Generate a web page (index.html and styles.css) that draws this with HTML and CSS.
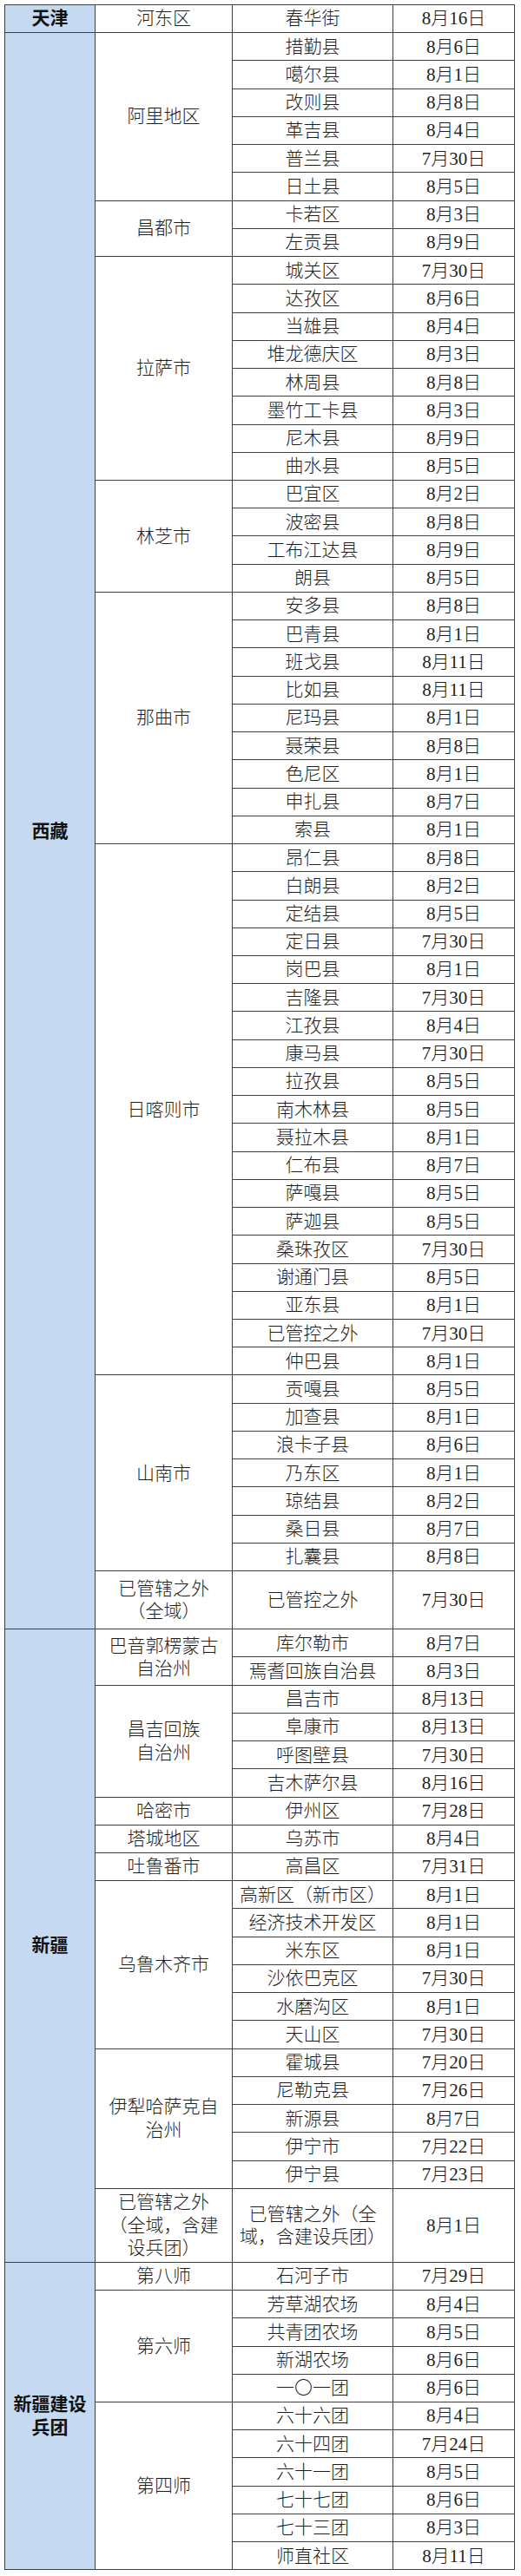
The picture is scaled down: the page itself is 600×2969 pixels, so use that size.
FILE: index.html
```html
<!DOCTYPE html>
<html lang="zh-CN">
<head>
<meta charset="utf-8">
<title>表</title>
<link rel="stylesheet" href="styles.css">
</head>
<body>
<div class="sheet">

  <div class="prov">
    <div class="pname">天津</div>
    <div class="cities">
      <div class="city">
        <div class="cname">河东区</div>
        <div class="counties">
          <div class="row"><div class="county">春华街</div><div class="date">8月16日</div></div>
        </div>
      </div>
    </div>
  </div>

  <div class="prov">
    <div class="pname">西藏</div>
    <div class="cities">
      <div class="city">
        <div class="cname">阿里地区</div>
        <div class="counties">
          <div class="row"><div class="county">措勤县</div><div class="date">8月6日</div></div>
          <div class="row"><div class="county">噶尔县</div><div class="date">8月1日</div></div>
          <div class="row"><div class="county">改则县</div><div class="date">8月8日</div></div>
          <div class="row"><div class="county">革吉县</div><div class="date">8月4日</div></div>
          <div class="row"><div class="county">普兰县</div><div class="date">7月30日</div></div>
          <div class="row"><div class="county">日土县</div><div class="date">8月5日</div></div>
        </div>
      </div>
      <div class="city">
        <div class="cname">昌都市</div>
        <div class="counties">
          <div class="row"><div class="county">卡若区</div><div class="date">8月3日</div></div>
          <div class="row"><div class="county">左贡县</div><div class="date">8月9日</div></div>
        </div>
      </div>
      <div class="city">
        <div class="cname">拉萨市</div>
        <div class="counties">
          <div class="row"><div class="county">城关区</div><div class="date">7月30日</div></div>
          <div class="row"><div class="county">达孜区</div><div class="date">8月6日</div></div>
          <div class="row"><div class="county">当雄县</div><div class="date">8月4日</div></div>
          <div class="row"><div class="county">堆龙德庆区</div><div class="date">8月3日</div></div>
          <div class="row"><div class="county">林周县</div><div class="date">8月8日</div></div>
          <div class="row"><div class="county">墨竹工卡县</div><div class="date">8月3日</div></div>
          <div class="row"><div class="county">尼木县</div><div class="date">8月9日</div></div>
          <div class="row"><div class="county">曲水县</div><div class="date">8月5日</div></div>
        </div>
      </div>
      <div class="city">
        <div class="cname">林芝市</div>
        <div class="counties">
          <div class="row"><div class="county">巴宜区</div><div class="date">8月2日</div></div>
          <div class="row"><div class="county">波密县</div><div class="date">8月8日</div></div>
          <div class="row"><div class="county">工布江达县</div><div class="date">8月9日</div></div>
          <div class="row"><div class="county">朗县</div><div class="date">8月5日</div></div>
        </div>
      </div>
      <div class="city">
        <div class="cname">那曲市</div>
        <div class="counties">
          <div class="row"><div class="county">安多县</div><div class="date">8月8日</div></div>
          <div class="row"><div class="county">巴青县</div><div class="date">8月1日</div></div>
          <div class="row"><div class="county">班戈县</div><div class="date">8月11日</div></div>
          <div class="row"><div class="county">比如县</div><div class="date">8月11日</div></div>
          <div class="row"><div class="county">尼玛县</div><div class="date">8月1日</div></div>
          <div class="row"><div class="county">聂荣县</div><div class="date">8月8日</div></div>
          <div class="row"><div class="county">色尼区</div><div class="date">8月1日</div></div>
          <div class="row"><div class="county">申扎县</div><div class="date">8月7日</div></div>
          <div class="row"><div class="county">索县</div><div class="date">8月1日</div></div>
        </div>
      </div>
      <div class="city">
        <div class="cname">日喀则市</div>
        <div class="counties">
          <div class="row"><div class="county">昂仁县</div><div class="date">8月8日</div></div>
          <div class="row"><div class="county">白朗县</div><div class="date">8月2日</div></div>
          <div class="row"><div class="county">定结县</div><div class="date">8月5日</div></div>
          <div class="row"><div class="county">定日县</div><div class="date">7月30日</div></div>
          <div class="row"><div class="county">岗巴县</div><div class="date">8月1日</div></div>
          <div class="row"><div class="county">吉隆县</div><div class="date">7月30日</div></div>
          <div class="row"><div class="county">江孜县</div><div class="date">8月4日</div></div>
          <div class="row"><div class="county">康马县</div><div class="date">7月30日</div></div>
          <div class="row"><div class="county">拉孜县</div><div class="date">8月5日</div></div>
          <div class="row"><div class="county">南木林县</div><div class="date">8月5日</div></div>
          <div class="row"><div class="county">聂拉木县</div><div class="date">8月1日</div></div>
          <div class="row"><div class="county">仁布县</div><div class="date">8月7日</div></div>
          <div class="row"><div class="county">萨嘎县</div><div class="date">8月5日</div></div>
          <div class="row"><div class="county">萨迦县</div><div class="date">8月5日</div></div>
          <div class="row"><div class="county">桑珠孜区</div><div class="date">7月30日</div></div>
          <div class="row"><div class="county">谢通门县</div><div class="date">8月5日</div></div>
          <div class="row"><div class="county">亚东县</div><div class="date">8月1日</div></div>
          <div class="row"><div class="county">已管控之外</div><div class="date">7月30日</div></div>
          <div class="row"><div class="county">仲巴县</div><div class="date">8月1日</div></div>
        </div>
      </div>
      <div class="city">
        <div class="cname">山南市</div>
        <div class="counties">
          <div class="row"><div class="county">贡嘎县</div><div class="date">8月5日</div></div>
          <div class="row"><div class="county">加查县</div><div class="date">8月1日</div></div>
          <div class="row"><div class="county">浪卡子县</div><div class="date">8月6日</div></div>
          <div class="row"><div class="county">乃东区</div><div class="date">8月1日</div></div>
          <div class="row"><div class="county">琼结县</div><div class="date">8月2日</div></div>
          <div class="row"><div class="county">桑日县</div><div class="date">8月7日</div></div>
          <div class="row"><div class="county">扎囊县</div><div class="date">8月8日</div></div>
        </div>
      </div>
      <div class="city">
        <div class="cname">已管辖之外<br>（全域）</div>
        <div class="counties">
          <div class="row tall2"><div class="county">已管控之外</div><div class="date">7月30日</div></div>
        </div>
      </div>
    </div>
  </div>

  <div class="prov">
    <div class="pname">新疆</div>
    <div class="cities">
      <div class="city">
        <div class="cname">巴音郭楞蒙古<br>自治州</div>
        <div class="counties">
          <div class="row"><div class="county">库尔勒市</div><div class="date">8月7日</div></div>
          <div class="row"><div class="county">焉耆回族自治县</div><div class="date">8月3日</div></div>
        </div>
      </div>
      <div class="city">
        <div class="cname">昌吉回族<br>自治州</div>
        <div class="counties">
          <div class="row"><div class="county">昌吉市</div><div class="date">8月13日</div></div>
          <div class="row"><div class="county">阜康市</div><div class="date">8月13日</div></div>
          <div class="row"><div class="county">呼图壁县</div><div class="date">7月30日</div></div>
          <div class="row"><div class="county">吉木萨尔县</div><div class="date">8月16日</div></div>
        </div>
      </div>
      <div class="city">
        <div class="cname">哈密市</div>
        <div class="counties">
          <div class="row"><div class="county">伊州区</div><div class="date">7月28日</div></div>
        </div>
      </div>
      <div class="city">
        <div class="cname">塔城地区</div>
        <div class="counties">
          <div class="row"><div class="county">乌苏市</div><div class="date">8月4日</div></div>
        </div>
      </div>
      <div class="city">
        <div class="cname">吐鲁番市</div>
        <div class="counties">
          <div class="row"><div class="county">高昌区</div><div class="date">7月31日</div></div>
        </div>
      </div>
      <div class="city">
        <div class="cname">乌鲁木齐市</div>
        <div class="counties">
          <div class="row"><div class="county">高新区（新市区）</div><div class="date">8月1日</div></div>
          <div class="row"><div class="county">经济技术开发区</div><div class="date">8月1日</div></div>
          <div class="row"><div class="county">米东区</div><div class="date">8月1日</div></div>
          <div class="row"><div class="county">沙依巴克区</div><div class="date">7月30日</div></div>
          <div class="row"><div class="county">水磨沟区</div><div class="date">8月1日</div></div>
          <div class="row"><div class="county">天山区</div><div class="date">7月30日</div></div>
        </div>
      </div>
      <div class="city">
        <div class="cname">伊犁哈萨克自<br>治州</div>
        <div class="counties">
          <div class="row"><div class="county">霍城县</div><div class="date">7月20日</div></div>
          <div class="row"><div class="county">尼勒克县</div><div class="date">7月26日</div></div>
          <div class="row"><div class="county">新源县</div><div class="date">8月7日</div></div>
          <div class="row"><div class="county">伊宁市</div><div class="date">7月22日</div></div>
          <div class="row"><div class="county">伊宁县</div><div class="date">7月23日</div></div>
        </div>
      </div>
      <div class="city">
        <div class="cname">已管辖之外<br>（全域，含建<br>设兵团）</div>
        <div class="counties">
          <div class="row tall3"><div class="county">已管辖之外（全<br>域，含建设兵团）</div><div class="date">8月1日</div></div>
        </div>
      </div>
    </div>
  </div>

  <div class="prov">
    <div class="pname">新疆建设<br>兵团</div>
    <div class="cities">
      <div class="city">
        <div class="cname">第八师</div>
        <div class="counties">
          <div class="row"><div class="county">石河子市</div><div class="date">7月29日</div></div>
        </div>
      </div>
      <div class="city">
        <div class="cname">第六师</div>
        <div class="counties">
          <div class="row"><div class="county">芳草湖农场</div><div class="date">8月4日</div></div>
          <div class="row"><div class="county">共青团农场</div><div class="date">8月5日</div></div>
          <div class="row"><div class="county">新湖农场</div><div class="date">8月6日</div></div>
          <div class="row"><div class="county">一〇一团</div><div class="date">8月6日</div></div>
        </div>
      </div>
      <div class="city">
        <div class="cname">第四师</div>
        <div class="counties">
          <div class="row"><div class="county">六十六团</div><div class="date">8月4日</div></div>
          <div class="row"><div class="county">六十四团</div><div class="date">7月24日</div></div>
          <div class="row"><div class="county">六十一团</div><div class="date">8月5日</div></div>
          <div class="row"><div class="county">七十七团</div><div class="date">8月6日</div></div>
          <div class="row"><div class="county">七十三团</div><div class="date">8月3日</div></div>
          <div class="row"><div class="county">师直社区</div><div class="date">8月11日</div></div>
        </div>
      </div>
    </div>
  </div>

</div>
</body>
</html>
```

FILE: styles.css
```css
html, body {
  margin: 0;
  padding: 0;
  background: #ffffff;
}

body {
  font-family: "Liberation Serif", "Noto Sans CJK SC", serif;
  font-size: 21px;
  line-height: 1.25;
  color: #1e1e1e;
}

.sheet {
  margin: 5px 0 0 5px;
  width: 586px;
  border: 1px solid #404040;
  background: #404040;
  display: flex;
  flex-direction: column;
  gap: 1px;
}

.prov {
  display: flex;
  gap: 1px;
}

.pname {
  width: 103px;
  flex: none;
  background: #c5d9f1;
  font-weight: bold;
  color: #111111;
  display: flex;
  align-items: center;
  justify-content: center;
  text-align: center;
}

.cities {
  flex: 1;
  display: flex;
  flex-direction: column;
  gap: 1px;
}

.city {
  display: flex;
  gap: 1px;
}

.cname {
  width: 157px;
  flex: none;
  background: #ffffff;
  display: flex;
  align-items: center;
  justify-content: center;
  text-align: center;
  font-weight: 300;
}

.counties {
  flex: 1;
  display: flex;
  flex-direction: column;
  gap: 1px;
}

.row {
  height: 31.24px;
  display: flex;
  gap: 1px;
}

.row.tall2 {
  height: 66px;
}

.row.tall3 {
  height: 84px;
}

.county,
.date {
  background: #ffffff;
  display: flex;
  align-items: center;
  justify-content: center;
  text-align: center;
  font-weight: 300;
}

.county {
  width: 184px;
  flex: none;
}

.date {
  flex: 1;
}
```
